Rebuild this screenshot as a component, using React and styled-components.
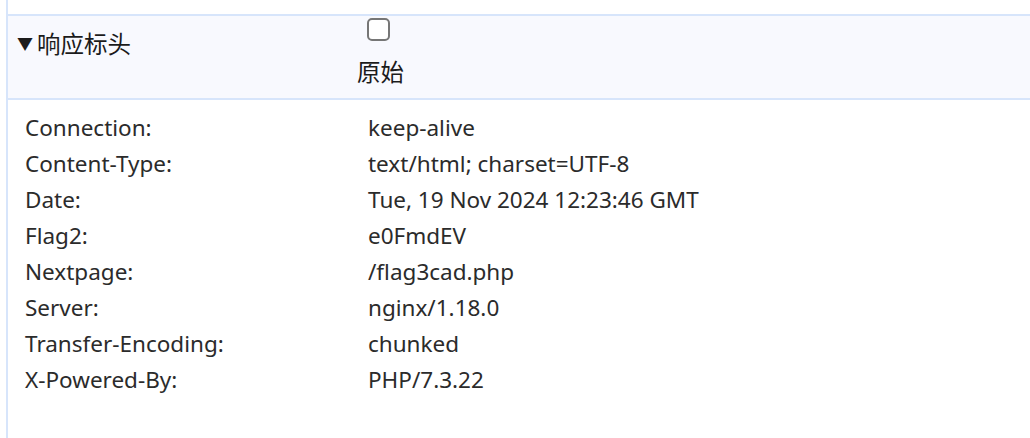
import React, { useState } from 'react';
import styled, { createGlobalStyle } from 'styled-components';

const GlobalStyle = createGlobalStyle`
  html, body {
    margin: 0;
    padding: 0;
    background: #ffffff;
  }
  body {
    font-family: 'Noto Sans', 'Noto Sans CJK SC', sans-serif;
    color: #222;
  }
`;

const Panel = styled.section`
  margin-left: 6px;
  border-left: 2px solid #d7e5fb;
  min-height: 438px;
  box-sizing: border-box;
  padding-top: 14px;
`;

const Header = styled.div`
  display: flex;
  align-items: flex-start;
  height: 82px;
  background: #f8f9fe;
  border-top: 2px solid #d7e5fb;
  border-bottom: 2px solid #d7e5fb;
`;

const Title = styled.div`
  width: 340px;
  padding: 12px 0 0 9px;
  font-size: 23.5px;
  line-height: 30px;
  color: #1b1b1b;
  font-family: 'Noto Sans CJK SC', sans-serif;
`;

const Arrow = styled.span`
  font-size: 16px;
  margin-right: 4px;
  vertical-align: 3px;
`;

const RawToggle = styled.label`
  display: flex;
  flex-direction: column;
  align-items: center;
  gap: 15px;
  padding-top: 2px;
  font-size: 23.5px;
  line-height: 30px;
  color: #1b1b1b;
  cursor: pointer;
  font-family: 'Noto Sans CJK SC', sans-serif;
`;

const Box = styled.span`
  width: 19px;
  height: 19px;
  border: 2px solid #767676;
  border-radius: 5px;
  background: ${p => (p.checked ? '#0060df' : '#fff')};
  box-sizing: content-box;
  margin-left: -5px;
`;

const HiddenInput = styled.input`
  display: none;
`;

const Rows = styled.div`
  padding: 9px 0 0 17px;
`;

const Row = styled.div`
  display: grid;
  grid-template-columns: 343px 1fr;
  height: 36px;
  align-items: center;
  font-size: 22.5px;
  color: #2b2b2b;
`;

const headers = [
  ['Connection:', 'keep-alive'],
  ['Content-Type:', 'text/html; charset=UTF-8'],
  ['Date:', 'Tue, 19 Nov 2024 12:23:46 GMT'],
  ['Flag2:', 'e0FmdEV'],
  ['Nextpage:', '/flag3cad.php'],
  ['Server:', 'nginx/1.18.0'],
  ['Transfer-Encoding:', 'chunked'],
  ['X-Powered-By:', 'PHP/7.3.22'],
];

export default function App() {
  const [raw, setRaw] = useState(false);
  return (
    <>
      <GlobalStyle />
      <Panel>
        <Header>
          <Title>
            <Arrow>▼</Arrow>响应标头
          </Title>
          <RawToggle>
            <HiddenInput type="checkbox" checked={raw} onChange={e => setRaw(e.target.checked)} />
            <Box checked={raw} />
            原始
          </RawToggle>
        </Header>
        <Rows>
          {headers.map(([name, value]) => (
            <Row key={name}>
              <span>{name}</span>
              <span>{value}</span>
            </Row>
          ))}
        </Rows>
      </Panel>
    </>
  );
}
